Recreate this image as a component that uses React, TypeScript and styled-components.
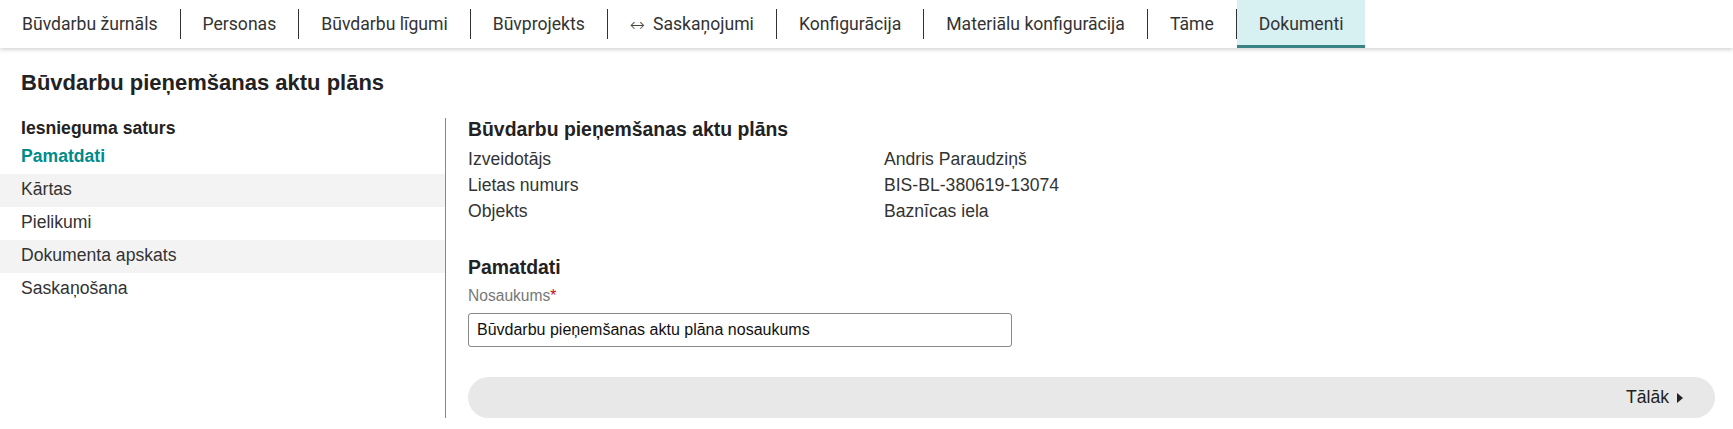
import styled, { createGlobalStyle } from 'styled-components';

type TabDef = { label: string; arrow?: boolean };

const tabs: TabDef[] = [
  { label: 'Būvdarbu žurnāls' },
  { label: 'Personas' },
  { label: 'Būvdarbu līgumi' },
  { label: 'Būvprojekts' },
  { label: 'Saskaņojumi', arrow: true },
  { label: 'Konfigurācija' },
  { label: 'Materiālu konfigurācija' },
  { label: 'Tāme' },
  { label: 'Dokumenti' },
];

const sections = ['Pamatdati', 'Kārtas', 'Pielikumi', 'Dokumenta apskats', 'Saskaņošana'];

const details = [
  { label: 'Izveidotājs', value: 'Andris Paraudziņš' },
  { label: 'Lietas numurs', value: 'BIS-BL-380619-13074' },
  { label: 'Objekts', value: 'Baznīcas iela' },
];

const App = () => {
  return (
    <>
      <GlobalStyle />
      <Nav>
        {tabs.map((tab, i) => (
          <NavItem key={tab.label}>
            {i > 0 && <Separator />}
            <Tab $active={tab.label === 'Dokumenti'}>
              {tab.arrow && <Arrow>↔</Arrow>}
              {tab.label}
            </Tab>
          </NavItem>
        ))}
      </Nav>
      <PageTitle>Būvdarbu pieņemšanas aktu plāns</PageTitle>
      <Layout>
        <Sidebar>
          <SidebarTitle>Iesnieguma saturs</SidebarTitle>
          <SectionList>
            {sections.map((s, i) => (
              <SectionItem key={s} $active={i === 0} $striped={i % 2 === 1}>
                {s}
              </SectionItem>
            ))}
          </SectionList>
        </Sidebar>
        <Main>
          <Heading>Būvdarbu pieņemšanas aktu plāns</Heading>
          <Details>
            {details.map((d) => (
              <DetailRow key={d.label}>
                <span>{d.label}</span>
                <span>{d.value}</span>
              </DetailRow>
            ))}
          </Details>
          <Heading $spaced>Pamatdati</Heading>
          <Field>
            <Label>
              Nosaukums<Required>*</Required>
            </Label>
            <Input defaultValue="Būvdarbu pieņemšanas aktu plāna nosaukums" />
          </Field>
          <Footer>
            <NextButton>
              Tālāk
              <svg width="6" height="10" viewBox="0 0 6 10">
                <path d="M0 0 L6 5 L0 10 Z" fill="#222" />
              </svg>
            </NextButton>
          </Footer>
        </Main>
      </Layout>
    </>
  );
};

const GlobalStyle = createGlobalStyle`
  body {
    margin: 0;
    background: #fff;
    font-family: "Liberation Sans", Arial, sans-serif;
    color: #333;
  }
`;

const Nav = styled.nav`
  display: flex;
  height: 48px;
  background: #fff;
  box-shadow: 0 2px 4px rgba(0, 0, 0, 0.16);
`;

const NavItem = styled.div`
  display: flex;
  align-items: center;
`;

const Separator = styled.span`
  width: 1px;
  height: 30px;
  background: #333;
`;

const Tab = styled.a<{ $active?: boolean }>`
  box-sizing: border-box;
  display: flex;
  align-items: center;
  height: 48px;
  padding: 3px 22px 0;
  font-family: Roboto, sans-serif;
  font-size: 17.6px;
  color: #333;
  cursor: pointer;
  white-space: nowrap;
  background: ${(p) => (p.$active ? '#d7f0f1' : 'transparent')};
  border-bottom: 3px solid ${(p) => (p.$active ? '#3b8285' : 'transparent')};
`;

const Arrow = styled.span`
  font-family: "DejaVu Sans", sans-serif;
  font-size: 18px;
  font-weight: 200;
  margin-right: 8px;
  color: #444;
`;

const PageTitle = styled.h1`
  margin: 22px 0 0;
  padding-left: 21px;
  font-size: 22px;
  line-height: 26px;
  font-weight: bold;
  color: #222;
`;

const Layout = styled.div`
  display: flex;
  margin-top: 22px;
`;

const Sidebar = styled.aside`
  width: 445px;
  flex-shrink: 0;
  border-right: 1px solid #888;
`;

const SidebarTitle = styled.div`
  padding-left: 21px;
  font-size: 17.6px;
  line-height: 20px;
  font-weight: bold;
  color: #222;
  margin-bottom: 3px;
`;

const SectionList = styled.ul`
  list-style: none;
  margin: 0;
  padding: 0;
`;

const SectionItem = styled.li<{ $active?: boolean; $striped?: boolean }>`
  padding: 0 0 3px 21px;
  line-height: 30px;
  font-size: 17.6px;
  font-weight: ${(p) => (p.$active ? 'bold' : 'normal')};
  color: ${(p) => (p.$active ? '#008b8b' : '#333')};
  background: ${(p) => (p.$striped ? '#f3f3f3' : 'transparent')};
`;

const Main = styled.main`
  flex: 1;
  padding: 0 18px 0 22px;
`;

const Heading = styled.h2<{ $spaced?: boolean }>`
  margin: ${(p) => (p.$spaced ? '32px 0 0' : '0')};
  font-size: 19.4px;
  line-height: 22px;
  font-weight: bold;
  color: #222;
`;

const Details = styled.div`
  margin-top: 6px;
`;

const DetailRow = styled.div`
  display: grid;
  grid-template-columns: 416px 1fr;
  font-size: 17.6px;
  line-height: 26px;
  color: #333;
`;

const Field = styled.div`
  display: flex;
  flex-direction: column;
  align-items: flex-start;
  margin-top: 8px;
`;

const Label = styled.label`
  font-size: 15.6px;
  line-height: 20px;
  color: #777;
  margin-bottom: 7px;
`;

const Required = styled.span`
  color: #d0021b;
`;

const Input = styled.input`
  box-sizing: border-box;
  width: 544px;
  height: 34px;
  padding: 0 8px;
  border: 1px solid #8a8a8a;
  border-radius: 3px;
  font-family: "Liberation Sans", Arial, sans-serif;
  font-size: 16px;
  color: #111;
  outline: none;
`;

const Footer = styled.div`
  display: flex;
  justify-content: flex-end;
  align-items: center;
  height: 41px;
  margin-top: 30px;
  padding: 0 32px;
  border-radius: 21px;
  background: #e8e8e8;
`;

const NextButton = styled.button`
  display: flex;
  align-items: center;
  gap: 8px;
  padding: 0;
  border: none;
  background: none;
  font-family: "Liberation Sans", Arial, sans-serif;
  font-size: 17.6px;
  color: #222;
  cursor: pointer;
`;

export default App;
